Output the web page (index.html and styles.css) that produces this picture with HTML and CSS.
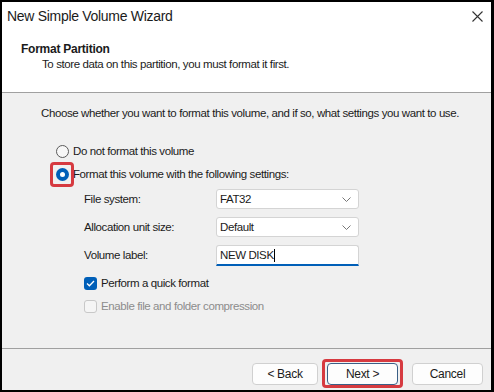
FILE: index.html
```html
<!DOCTYPE html>
<html lang="en">
<head>
    <meta charset="UTF-8">
    <meta name="viewport" content="width=device-width, initial-scale=1.0">
    <title>New Simple Volume Wizard</title>
    <link rel="stylesheet" href="styles.css">
</head>
<body>
    <div class="window">
        <div class="titlebar">
            <span class="title">New Simple Volume Wizard</span>
            <svg class="close" width="11" height="11" viewBox="0 0 11 11">
                <path d="M0.5 0.5 L10.5 10.5 M10.5 0.5 L0.5 10.5" stroke="#333" stroke-width="1.1" fill="none"/>
            </svg>
        </div>

        <div class="header">
            <div class="header-title">Format Partition</div>
            <div class="header-sub">To store data on this partition, you must format it first.</div>
        </div>

        <div class="content">
            <p class="intro">Choose whether you want to format this volume, and if so, what settings you want to use.</p>

            <div class="option">
                <span class="radio"></span>
                <span>Do not format this volume</span>
            </div>
            <div class="option">
                <span class="mark"><span class="radio checked"></span></span>
                <span>Format this volume with the following settings:</span>
            </div>

            <div class="settings">
                <label>File system:</label>
                <div class="select">
                    <span>FAT32</span>
                    <svg width="9" height="5" viewBox="0 0 9 5"><path d="M0.5 0.5 L4.5 4.5 L8.5 0.5" stroke="#777" fill="none"/></svg>
                </div>

                <label>Allocation unit size:</label>
                <div class="select">
                    <span>Default</span>
                    <svg width="9" height="5" viewBox="0 0 9 5"><path d="M0.5 0.5 L4.5 4.5 L8.5 0.5" stroke="#777" fill="none"/></svg>
                </div>

                <label>Volume label:</label>
                <div class="textbox">NEW DISK<span class="caret"></span></div>
            </div>

            <div class="checks">
                <div class="option">
                    <span class="checkbox checked">
                        <svg width="9" height="7" viewBox="0 0 9 7"><path d="M1 3.5 L3.4 5.8 L8 1" stroke="#fff" stroke-width="1.3" fill="none"/></svg>
                    </span>
                    <span>Perform a quick format</span>
                </div>
                <div class="option disabled">
                    <span class="checkbox"></span>
                    <span>Enable file and folder compression</span>
                </div>
            </div>
        </div>

        <div class="footer">
            <button class="btn back">&lt; Back</button>
            <button class="btn next">Next &gt;</button>
            <button class="btn cancel">Cancel</button>
        </div>
    </div>
</body>
</html>
```

FILE: styles.css
```css
:root {
    --text-color: #1b1b1b;
    --muted-color: #8c8c8c;
    --panel-background: #f0f0f0;
    --line-color: #a0a0a0;
    --accent-color: #005fb8;
    --highlight-color: #d63a40;
}

html, body {
    margin: 0;
    height: 100%;
}

body {
    background-color: #000000;
    font-family: 'Liberation Sans', Arial, sans-serif;
    font-size: 11.5px;
    letter-spacing: -0.4px;
    color: var(--text-color);
    white-space: nowrap;
}

.window {
    box-sizing: border-box;
    height: 392px;
    width: 494px;
    border-style: solid;
    border-color: #000000;
    border-width: 2px 3px 2px 2px;
    display: flex;
    flex-direction: column;
    background-color: var(--panel-background);
}

.titlebar {
    height: 28px;
    background-color: #ffffff;
    display: flex;
    align-items: center;
    justify-content: space-between;
    padding: 0 8px 0 5px;
}

.title {
    font-size: 14px;
    letter-spacing: -0.3px;
}

.header {
    background-color: #ffffff;
    padding: 12px 0 20px 19px;
    border-bottom: 1px solid var(--line-color);
    line-height: 15px;
}

.header-title {
    font-weight: bold;
    font-size: 12px;
    letter-spacing: -0.25px;
}

.header-sub {
    padding-left: 21px;
}

.content {
    flex: 1;
    padding: 13px 0 0 39px;
    line-height: 15px;
}

.intro {
    margin: 0 0 22px 0;
}

.option {
    display: flex;
    align-items: center;
    height: 16px;
    gap: 4px;
    margin-left: 15px;
    margin-bottom: 7px;
}

.radio {
    box-sizing: border-box;
    display: inline-block;
    width: 13px;
    height: 13px;
    border-radius: 50%;
    border: 1px solid #5a5a5a;
    background-color: #f7f7f7;
}

.radio.checked {
    border: none;
    background-color: var(--accent-color);
    display: flex;
    align-items: center;
    justify-content: center;
}

.radio.checked::before {
    content: "";
    width: 5px;
    height: 5px;
    border-radius: 50%;
    background-color: #ffffff;
}

.mark {
    position: relative;
    display: inline-flex;
}

.mark::after {
    content: "";
    position: absolute;
    top: -6px;
    left: -6px;
    right: -5px;
    bottom: -6px;
    border: 3px solid var(--highlight-color);
    border-radius: 4px;
}

.settings {
    display: grid;
    grid-template-columns: 132px 143px;
    grid-template-rows: 20px 20px 21px;
    row-gap: 8px;
    align-items: center;
    margin: 1px 0 0 43px;
}

.select, .textbox {
    box-sizing: border-box;
    height: 100%;
    background-color: #ffffff;
    border: 1px solid #d4d4d4;
    border-radius: 3px;
    display: flex;
    align-items: center;
    justify-content: space-between;
    padding: 0 7px 0 3px;
}

.textbox {
    justify-content: flex-start;
    border-bottom: 2px solid var(--accent-color);
    border-radius: 3px 3px 0 0;
}

.caret {
    display: inline-block;
    width: 1px;
    height: 13px;
    background-color: #000000;
}

.checks {
    margin: 9px 0 0 28px;
}

.checks .option {
    margin-left: 15px;
    margin-bottom: 7px;
}

.checkbox {
    box-sizing: border-box;
    width: 13px;
    height: 13px;
    border-radius: 3px;
    border: 1px solid #c8c8c8;
    background-color: #f5f5f5;
    display: inline-flex;
    align-items: center;
    justify-content: center;
}

.checkbox.checked {
    border: none;
    background-color: var(--accent-color);
}

.disabled {
    color: var(--muted-color);
}

.footer {
    height: 42px;
    box-sizing: border-box;
    border-top: 1px solid var(--line-color);
    padding: 14px 8px 6px 250px;
    display: flex;
    align-items: flex-start;
}

.btn {
    font-family: inherit;
    font-size: 12px;
    letter-spacing: -0.3px;
    color: var(--text-color);
    height: 22px;
    width: 71px;
    background-color: #fdfdfd;
    border: 1px solid #d0d0d0;
    border-radius: 4px;
    padding: 0;
}

.back {
    width: 66px;
    margin-right: 9px;
}

.next {
    position: relative;
    border-color: #3a5f86;
    margin-right: 14px;
}

.next::after {
    content: "";
    position: absolute;
    top: -5px;
    left: -6px;
    right: -6px;
    bottom: -4px;
    border: 3px solid var(--highlight-color);
    border-radius: 4px;
}
```
